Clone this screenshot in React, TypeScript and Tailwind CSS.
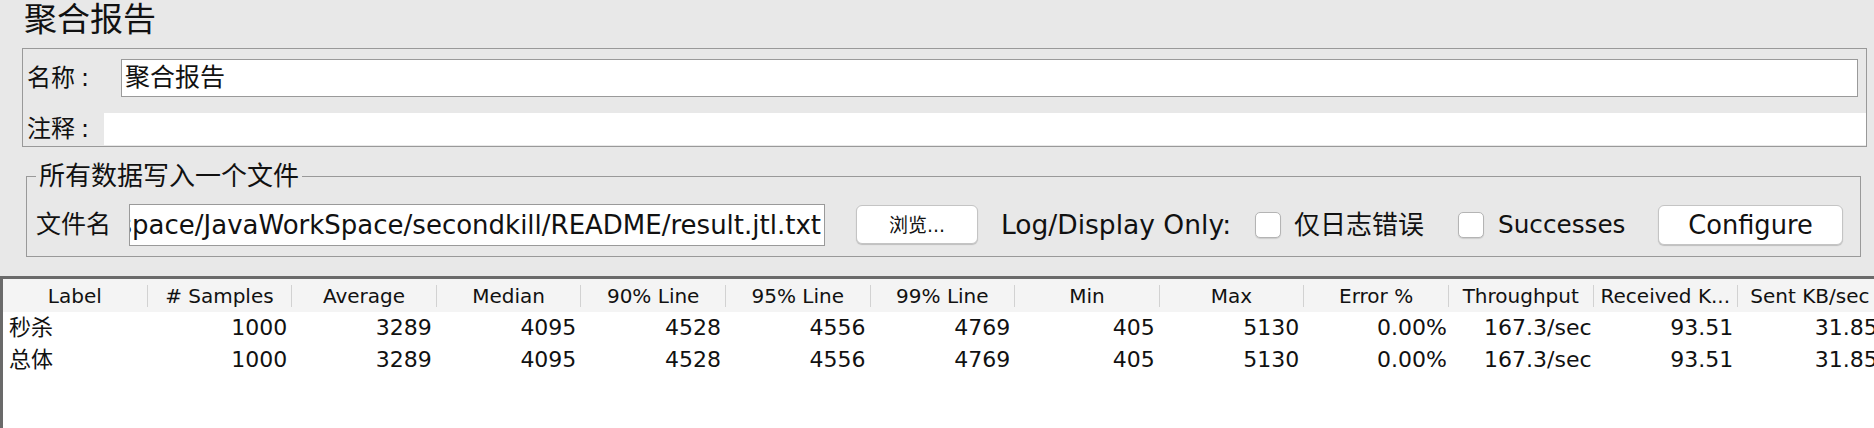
import React from "react";

const FONT = { fontFamily: '"DejaVu Sans", "Noto Sans CJK SC", sans-serif' };

const headers = [
  "Label",
  "# Samples",
  "Average",
  "Median",
  "90% Line",
  "95% Line",
  "99% Line",
  "Min",
  "Max",
  "Error %",
  "Throughput",
  "Received K...",
  "Sent KB/sec",
];

const rows = [
  ["秒杀", "1000", "3289", "4095", "4528", "4556", "4769", "405", "5130", "0.00%", "167.3/sec", "93.51", "31.85"],
  ["总体", "1000", "3289", "4095", "4528", "4556", "4769", "405", "5130", "0.00%", "167.3/sec", "93.51", "31.85"],
];

function Checkbox() {
  return (
    <div className="w-[26px] h-[26px] rounded-[5px] border border-[#b4b4b4] bg-white shadow-[0_1px_1px_rgba(0,0,0,0.12)] shrink-0" />
  );
}

export default function App() {
  return (
    <div
      className="w-[1874px] h-[428px] overflow-hidden bg-[#e8e8e8] text-[#111] flex flex-col"
      style={FONT}
    >
      {/* Title */}
      <div className="h-[48px] pl-[24px] text-[33px] leading-[40px] shrink-0">聚合报告</div>

      {/* Name / comment panel */}
      <div className="ml-[22px] w-[1845px] h-[99px] border border-[#999] shrink-0 flex flex-col">
        <div className="mt-[10px] flex items-center h-[38px]">
          <div className="w-[98px] pl-[4px] text-[24px] leading-[30px] whitespace-nowrap">
            名称<span className="ml-[6px]">:</span>
          </div>
          <div className="w-[1737px] h-[38px] border border-[#9a9a9a] bg-white flex items-center pl-[3px] text-[25px] leading-[30px]">
            聚合报告
          </div>
        </div>
        <div className="mt-[16px] flex items-center h-[32px]">
          <div className="w-[81px] pl-[4px] text-[24px] leading-[30px] whitespace-nowrap">
            注释<span className="ml-[6px]">:</span>
          </div>
          <div className="flex-1 h-[32px] bg-white" />
        </div>
      </div>

      {/* Fieldset */}
      <fieldset className="ml-[26px] mt-[14px] w-[1835px] h-[96px] border border-[#999] shrink-0 flex flex-col">
        <legend className="ml-[9px] px-[3px] text-[26px] leading-[30px]">所有数据写入一个文件</legend>
        <div className="mt-[12px] flex items-center h-[43px]">
          <div className="w-[102px] pl-[9px] text-[25px] leading-[30px] whitespace-nowrap">文件名</div>
          <div className="w-[696px] h-[42px] border border-[#9a9a9a] bg-white overflow-hidden flex justify-end items-center pr-[3px] text-[26px] leading-[30px] whitespace-nowrap">
            /Users/admin/Documents/workspace/JavaWorkSpace/secondkill/README/result.jtl.txt
          </div>
          <div className="ml-[31px] w-[122px] h-[39px] rounded-[6px] border border-[#c4c4c4] bg-white shadow-[0_1px_1px_rgba(0,0,0,0.18)] flex items-center justify-center text-[19px] leading-[24px] shrink-0">
            浏览...
          </div>
          <div className="ml-[23px] w-[254px] text-[26.5px] leading-[30px] whitespace-nowrap">Log/Display Only:</div>
          <Checkbox />
          <div className="ml-[13px] w-[164px] text-[26px] leading-[30px] whitespace-nowrap">仅日志错误</div>
          <Checkbox />
          <div className="ml-[14px] w-[160px] text-[24.7px] leading-[30px] whitespace-nowrap">Successes</div>
          <div className="w-[185px] h-[40px] rounded-[6px] border border-[#c4c4c4] bg-white shadow-[0_1px_1px_rgba(0,0,0,0.18)] flex items-center justify-center text-[25.7px] leading-[30px] shrink-0">
            Configure
          </div>
        </div>
      </fieldset>

      {/* Table */}
      <div className="mt-[19px] flex-1 bg-white border-t-[3px] border-l-[3px] border-[#6a6a6a] overflow-hidden">
        <div className="grid grid-cols-[repeat(13,144.6px)] h-[33px] bg-[#f4f4f4] text-[20px] leading-[26px]">
          {headers.map((h) => (
            <div key={h} className="flex items-center h-[33px] whitespace-nowrap">
              <div className="flex-1 text-center overflow-hidden">{h}</div>
              <div className="w-px h-[22px] bg-[#d2d2d2] shrink-0" />
            </div>
          ))}
        </div>
        {rows.map((r, ri) => (
          <div key={ri} className="grid grid-cols-[repeat(13,144.6px)] h-[32px] text-[22px] leading-[28px]">
            {r.map((c, ci) => (
              <div
                key={ci}
                className={
                  ci === 0
                    ? "flex items-center pl-[6px] whitespace-nowrap"
                    : ci === 9 || ci === 10
                    ? "flex items-center justify-end pr-[2px] whitespace-nowrap"
                    : "flex items-center justify-end pr-[5px] whitespace-nowrap"
                }
              >
                {c}
              </div>
            ))}
          </div>
        ))}
      </div>
    </div>
  );
}
